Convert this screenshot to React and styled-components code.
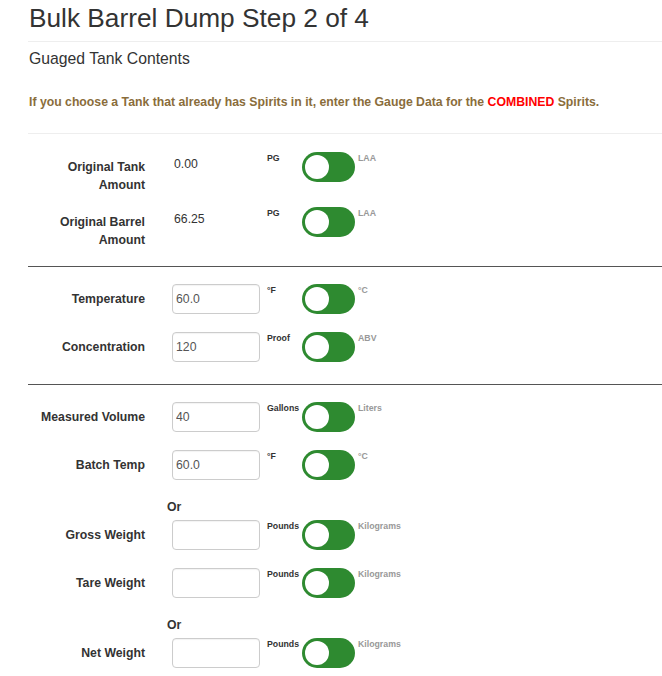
import React from 'react'
import styled, { createGlobalStyle } from 'styled-components'

const GlobalStyle = createGlobalStyle`
    body {
        margin: 0;
        background: #ffffff;
        font-family: 'Liberation Sans', Arial, Helvetica, sans-serif;
        color: #333333;
        overflow: hidden;
    }
`

const Page = styled.div`
    padding-left: 28px;
`

const Title = styled.h2`
    margin: 0;
    padding: 4px 0 0 1px;
    font-size: 26.25px;
    line-height: 29px;
    font-weight: normal;
    color: #333333;
`

const Rule = styled.hr`
    margin: ${p => p.$space || '8px 0 0'};
    border: 0;
    border-top: 1px solid #eeeeee;
`

const Divider = styled.hr`
    width: 100%;
    margin: 4px 0 17px;
    border: 0;
    border-top: 1px solid #555555;
`

const Subtitle = styled.h4`
    margin: 8px 0 0 1px;
    font-size: 15.75px;
    line-height: 18px;
    font-weight: normal;
    color: #333333;
`

const Notice = styled.p`
    margin: 25px 0 22px 1px;
    font-size: 12.25px;
    line-height: 18px;
    font-weight: bold;
    color: #8a6d3b;
`

const Highlight = styled.span`
    color: #ff0000;
`

// flex column so row and divider margins add up instead of collapsing
const Fields = styled.div`
    display: flex;
    flex-direction: column;
    padding-top: 18px;
`

const Row = styled.div`
    display: flex;
    align-items: flex-start;
    margin-bottom: 18px;
`

const Label = styled.label`
    width: 117px;
    margin-right: 27px;
    padding-top: 6px;
    margin-bottom: -5px;
    text-align: right;
    font-size: 12.25px;
    line-height: 18px;
    font-weight: bold;
    color: #333333;
`

const StaticValue = styled.div`
    width: 86px;
    padding: 3px 0 0 2px;
    margin-right: 7px;
    font-size: 12.25px;
    line-height: 18px;
    color: #333333;
`

const Field = styled.input`
    box-sizing: border-box;
    width: 88px;
    height: 30px;
    margin: 0 7px 0 0;
    padding: 0 3px;
    border: 1px solid #cccccc;
    border-radius: 4px;
    font-family: inherit;
    font-size: 12.25px;
    color: #555555;
    background: #ffffff;
    box-shadow: inset 0 1px 1px rgba(0, 0, 0, 0.05);
`

const Unit = styled.span`
    width: 35px;
    font-size: 8.75px;
    line-height: 12px;
    font-weight: bold;
    white-space: nowrap;
    color: ${p => (p.$alt ? '#999999' : '#333333')};
`

const Switch = styled.span`
    position: relative;
    flex: none;
    width: 53px;
    height: 30px;
    margin-right: 3px;
    border-radius: 15px;
    background: #2e8a30;
`

const Knob = styled.span`
    position: absolute;
    top: 3px;
    left: 3px;
    width: 24px;
    height: 24px;
    border-radius: 50%;
    background: #ffffff;
`

const OrText = styled.div`
    margin: 0 0 4px 139px;
    font-size: 12.25px;
    line-height: 18px;
    font-weight: bold;
    color: #333333;
`

const Toggle = ({ on, off }) => (
    <>
        <Unit>{on}</Unit>
        <Switch>
            <Knob />
        </Switch>
        <Unit $alt>{off}</Unit>
    </>
)

const FieldRow = ({ label, value, on, off, readOnly }) => (
    <Row>
        <Label>{label}</Label>
        {readOnly ? (
            <StaticValue>{value}</StaticValue>
        ) : (
            <Field defaultValue={value} />
        )}
        <Toggle on={on} off={off} />
    </Row>
)

const App = () => (
    <Page>
        <GlobalStyle />
        <Title>Bulk Barrel Dump Step 2 of 4</Title>
        <Rule />
        <Subtitle>Guaged Tank Contents</Subtitle>
        <Notice>
            If you choose a Tank that already has Spirits in it, enter the Gauge Data for the{' '}
            <Highlight>COMBINED</Highlight> Spirits.
        </Notice>
        <Rule $space="0" />
        <Fields>
            <FieldRow readOnly label={<>Original Tank<br />Amount</>} value="0.00" on="PG" off="LAA" />
            <FieldRow readOnly label={<>Original Barrel<br />Amount</>} value="66.25" on="PG" off="LAA" />
            <Divider />
            <FieldRow label="Temperature" value="60.0" on="°F" off="°C" />
            <FieldRow label="Concentration" value="120" on="Proof" off="ABV" />
            <Divider />
            <FieldRow label="Measured Volume" value="40" on="Gallons" off="Liters" />
            <FieldRow label="Batch Temp" value="60.0" on="°F" off="°C" />
            <OrText>Or</OrText>
            <FieldRow label="Gross Weight" value="" on="Pounds" off="Kilograms" />
            <FieldRow label="Tare Weight" value="" on="Pounds" off="Kilograms" />
            <OrText>Or</OrText>
            <FieldRow label="Net Weight" value="" on="Pounds" off="Kilograms" />
        </Fields>
    </Page>
)

export default App
